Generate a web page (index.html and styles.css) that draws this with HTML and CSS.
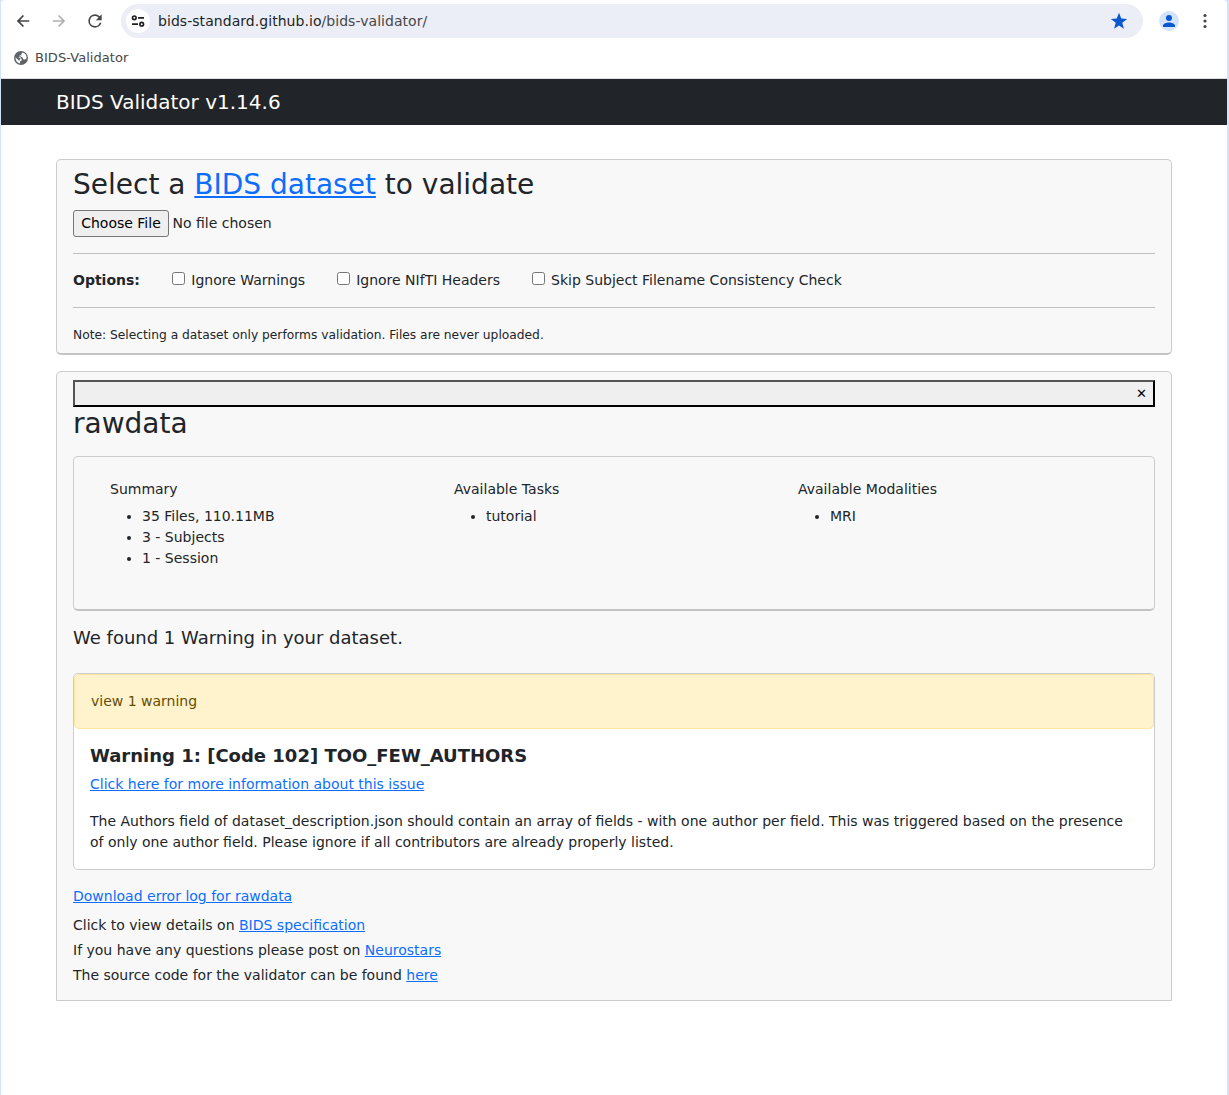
FILE: index.html
```html
<!DOCTYPE html>
<html lang="en">
<head>
<meta charset="utf-8">
<title>BIDS Validator</title>
<link rel="stylesheet" href="styles.css">
</head>
<body>
<div class="window">
  <header class="chrome">
    <div class="toolbar">
      <svg class="nav-icon" width="20" height="20" viewBox="0 0 24 24" fill="#464646"><path d="M19.500 11H8.330l4.900-4.900L11.800 4.700 4.500 12l7.300 7.300 1.430-1.400L8.330 13H19.500z"/></svg>
      <svg class="nav-icon" width="20" height="20" viewBox="0 0 24 24" fill="#b0b0b0"><path d="M4.500 11h11.170l-4.900-4.900 1.430-1.400L19.500 12l-7.300 7.300-1.430-1.400 4.900-4.900H4.500z"/></svg>
      <svg class="nav-icon" width="20" height="20" viewBox="0 0 24 24" fill="#464646"><path d="M17.65 6.35A7.96 7.96 0 0 0 12 4a8 8 0 1 0 7.73 10h-2.08A6 6 0 1 1 12 6c1.66 0 3.14.69 4.22 1.78L13 11h7V4l-2.35 2.35z"/></svg>
      <div class="address">
        <span class="site-info">
          <svg width="14" height="12" viewBox="0 0 14 12" fill="none" stroke="#1f1f1f" stroke-width="1.7"><circle cx="3.3" cy="2.8" r="1.8"/><path d="M7 2.8h6M1 9.200h6"/><circle cx="10.7" cy="9.2" r="1.8"/></svg>
        </span>
        <span class="url">bids-standard.github.io<span class="url-path">/bids-validator/</span></span>
        <svg class="star" width="20" height="20" viewBox="0 0 24 24" fill="#0b57d0"><path d="M12 17.270 17.900 21.200l-2-7.100L21.800 9.500l-7.100-.4L12 2l-2.700 7.100-7.100.4 5.900 4.600-2 7.100z"/></svg>
      </div>
      <span class="avatar"><svg width="18" height="18" viewBox="0 0 24 24" fill="#0b57d0"><path d="M12 12a4 4 0 1 0 0-8 4 4 0 0 0 0 8zm0 2c-3 0-8 1.400-8 4.300V20h16v-1.700C20 15.400 15 14 12 14z"/></svg></span>
      <svg class="menu" width="20" height="20" viewBox="0 0 20 20" fill="#464646"><circle cx="10" cy="4.500" r="1.600"/><circle cx="10" cy="10" r="1.600"/><circle cx="10" cy="15.500" r="1.600"/></svg>
    </div>
    <div class="bookmarks">
      <svg width="14" height="14" viewBox="0 0 14 14"><circle cx="7" cy="7" r="7" fill="#5f6368"/><path d="M8.300 1.500v1.200c0 .8-.6 1.400-1.400 1.400H5.700v1.300c0 .4-.3.700-.7.700H3.900l2.900 1.100c.5.200.8.600.8 1.100v.9c0 .4-.3.700-.7.700H6.100v2.600A5.600 5.600 0 0 1 1.500 6.200l2.800 2.700c.4.400.8.500 1.200.5M8.300 1.500A5.600 5.600 0 0 1 12.500 7.600c-.5.700-1.200 1-2.100 1-.8 0-1.400-.5-1.500-1.300-.1-.7-.6-1.100-1.300-1.200L6 5.800" fill="#fff"/></svg>
      <span>BIDS-Validator</span>
    </div>
  </header>
  <nav class="navbar">BIDS Validator v1.14.6</nav>
  <main class="content">
    <section class="panel upload">
      <h1>Select a <a href="#">BIDS dataset</a> to validate</h1>
      <div class="file-row"><button class="file-button">Choose File</button><span>No file chosen</span></div>
      <div class="options">
        <b>Options:</b>
        <label><input type="checkbox">Ignore Warnings</label>
        <label><input type="checkbox">Ignore NIfTI Headers</label>
        <label><input type="checkbox">Skip Subject Filename Consistency Check</label>
      </div>
      <small class="note">Note: Selecting a dataset only performs validation. Files are never uploaded.</small>
    </section>
    <section class="panel results">
      <button class="close">✕</button>
      <h1>rawdata</h1>
      <div class="summary">
        <div>Summary<ul><li>35 Files, 110.11MB</li><li>3 - Subjects</li><li>1 - Session</li></ul></div>
        <div>Available Tasks<ul><li>tutorial</li></ul></div>
        <div>Available Modalities<ul><li>MRI</li></ul></div>
      </div>
      <h2>We found 1 Warning in your dataset.</h2>
      <div class="warning-card">
        <div class="alert">view 1 warning</div>
        <div class="warning-body">
          <h3>Warning 1: [Code 102] TOO_FEW_AUTHORS</h3>
          <a href="#">Click here for more information about this issue</a>
          <p>The Authors field of dataset_description.json should contain an array of fields - with one author per field. This was triggered based on the presence of only one author field. Please ignore if all contributors are already properly listed.</p>
        </div>
      </div>
      <a class="download" href="#">Download error log for rawdata</a>
      <div class="help">
        <div>Click to view details on <a href="#">BIDS specification</a></div>
        <div>If you have any questions please post on <a href="#">Neurostars</a></div>
        <div>The source code for the validator can be found <a href="#">here</a></div>
      </div>
    </section>
  </main>
</div>
</body>
</html>
```
FILE: styles.css
```css
* { box-sizing: border-box; }
body {
  margin: 0;
  background: #d3e3fd;
  color: #212529;
  font: 14px/21px "DejaVu Sans", sans-serif;
}
.window {
  height: 1095px;
  margin: 0 2px 0 1px;
  background: #fff;
  border-radius: 4px 4px 0 0;
  overflow: hidden;
}
a { color: #0d6efd; text-decoration: underline; }
h1, h2, h3, p, ul { margin: 0; font-weight: 400; }
button { font: inherit; color: #000; }

.chrome { height: 79px; border-bottom: 1px solid #dcdcdc; }
.toolbar { display: flex; align-items: center; height: 42px; padding: 0 12px; }
.nav-icon { flex: none; margin-right: 16px; }
.address {
  display: flex;
  align-items: center;
  width: 1022px;
  height: 34px;
  padding: 0 14px 0 5px;
  background: #ebeef7;
  border-radius: 17px;
}
.site-info {
  display: flex;
  align-items: center;
  justify-content: center;
  width: 24px;
  height: 24px;
  margin-right: 8px;
  background: #fff;
  border-radius: 50%;
}
.url { flex: 1; color: #1f1f1f; letter-spacing: 0.05px; }
.url-path { color: #474747; }
.avatar {
  display: flex;
  align-items: center;
  justify-content: center;
  width: 20px;
  height: 20px;
  margin: 0 16px;
  background: #d3e3fd;
  border-radius: 50%;
}
.bookmarks {
  display: flex;
  align-items: center;
  gap: 7px;
  height: 31px;
  padding-left: 13px;
  color: #474747;
  font-size: 13px;
  letter-spacing: 0.05px;
}
.navbar {
  height: 46px;
  padding-left: 55px;
  background: #212529;
  color: #fff;
  font-size: 20px;
  line-height: 46px;
}

.content { padding: 34px 55px 0; }
.panel {
  background: #f8f8f8;
  border: 1px solid #ccc;
  padding: 8px 16px;
}
.panel h1 { font-size: 28px; line-height: 34px; }
.upload {
  height: 196px;
  border-bottom: 2px solid #c4c4c4;
  border-radius: 5px;
}
.file-row { display: flex; align-items: center; gap: 3.5px; margin-top: 8px; }
.file-button {
  width: 96px;
  height: 27px;
  padding: 0;
  background: #efefef;
  border: 1px solid #767676;
  border-radius: 3px;
}
.options {
  display: flex;
  align-items: center;
  height: 55px;
  margin: 16px 0;
  border: solid #c0c0c0;
  border-width: 1px 0;
}
.options b { margin-right: 32px; }
.options label { display: flex; align-items: center; margin-right: 31.6px; }
.options input { width: 13px; height: 13px; margin: 0 6.4px 4px 0; }
.note { display: block; padding-top: 1px; font-size: 12.25px; }

.results {
  height: 630px;
  margin-top: 16px;
  border-radius: 5px 5px 0 0;
}
.close {
  display: block;
  width: 100%;
  height: 27px;
  padding: 0 6px;
  background: #efefef;
  border: 2px outset #000;
  font-size: 13px;
  text-align: right;
  line-height: 23px;
}
.summary {
  display: grid;
  grid-template-columns: repeat(3, 344px);
  height: 155px;
  margin-top: 15px;
  padding: 22px 36px;
  border: 1px solid #ccc;
  border-bottom: 2px solid #c4c4c4;
  border-radius: 5px;
}
.summary ul { margin-top: 6px; padding-left: 32px; }
.results h2 { margin-top: 16px; font-size: 18px; line-height: 22px; }
.warning-card {
  height: 197px;
  margin-top: 24px;
  background: #fff;
  border: 1px solid #ccc;
  border-radius: 5px;
}
.alert {
  height: 55px;
  padding: 16px;
  background: #fff3cd;
  border: 1px solid #ffe69c;
  border-radius: 5px;
  color: #664d03;
}
.warning-body { padding: 16px; }
.warning-body h3 { margin-bottom: 7px; font-size: 18px; line-height: 22px; font-weight: 700; }
.warning-body p { margin-top: 16px; }
.download { display: inline-block; margin-top: 16px; }
.help { margin-top: 6px; line-height: 25px; }
```
